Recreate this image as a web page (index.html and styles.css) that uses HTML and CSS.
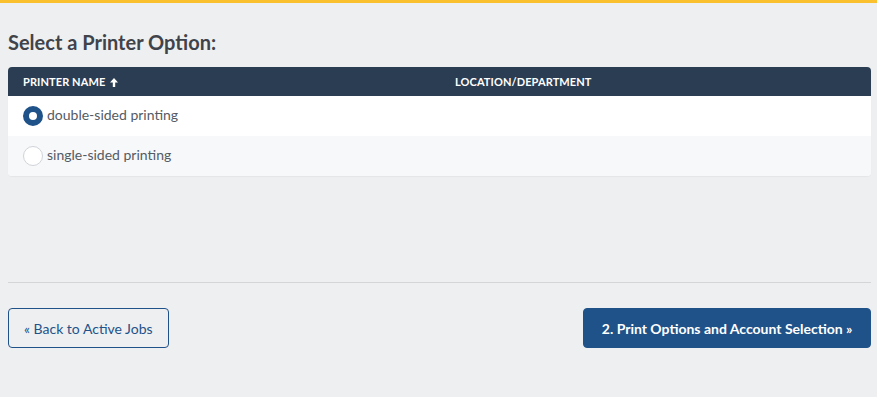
FILE: index.html
```html
<!DOCTYPE html>
<html lang="en">
<head>
    <meta charset="UTF-8">
    <meta name="viewport" content="width=device-width, initial-scale=1.0">
    <title>Select a Printer</title>
    <link rel="stylesheet" href="styles.css">
</head>
<body>
    <div class="top-bar"></div>

    <div class="page">
        <h2 class="page-title">Select a Printer Option:</h2>

        <!-- Printer list -->
        <div class="printer-table">
            <div class="table-head">
                <div class="col-name">Printer Name
                    <svg class="sort-arrow" width="8" height="9" viewBox="0 0 8 9">
                        <path d="M4 0 L8 4.5 L5.2 4.5 L5.2 9 L2.8 9 L2.8 4.5 L0 4.5 Z" fill="#fff"/>
                    </svg>
                </div>
                <div class="col-location">Location/Department</div>
            </div>
            <label class="table-row">
                <input type="radio" name="printer" class="printer-radio" checked>
                <span class="col-name">double-sided printing</span>
                <span class="col-location"></span>
            </label>
            <label class="table-row alt">
                <input type="radio" name="printer" class="printer-radio">
                <span class="col-name">single-sided printing</span>
                <span class="col-location"></span>
            </label>
        </div>

        <hr class="divider">

        <div class="actions">
            <button class="btn btn-outline">&laquo; Back to Active Jobs</button>
            <button class="btn btn-primary">2. Print Options and Account Selection &raquo;</button>
        </div>
    </div>
</body>
</html>
```

FILE: styles.css
```css
* {
    margin: 0;
    padding: 0;
    box-sizing: border-box;
    font-family: 'Lato', 'Liberation Sans', sans-serif;
}

body {
    background-color: #eeeff1;
    min-height: 100vh;
}

.top-bar {
    height: 3px;
    background-color: #fbc02d;
}

.page {
    padding: 0 6px 0 8px;
}

.page-title {
    margin-top: 27px;
    font-size: 20px;
    font-weight: 700;
    color: #404349;
    line-height: 24px;
}

.printer-table {
    margin-top: 13px;
    border-radius: 4px;
    overflow: hidden;
    background-color: #fff;
    box-shadow: 0 1px 1px rgba(0, 0, 0, 0.04);
}

.table-head {
    display: flex;
    height: 29px;
    align-items: center;
    background-color: #2a3d52;
    color: #fff;
    font-size: 11px;
    font-weight: 700;
    letter-spacing: 0.1px;
    text-transform: uppercase;
    padding-left: 15px;
}

.table-head .col-name {
    width: 432px;
}

.sort-arrow {
    margin-left: 2px;
    vertical-align: -1px;
}

.table-row {
    display: flex;
    align-items: center;
    height: 40px;
    padding-left: 15px;
    color: #555b63;
    font-size: 14px;
    cursor: pointer;
}

.table-row .col-name {
    margin-top: -3px;
}

.table-row.alt {
    background-color: #f6f8fa;
}

.printer-radio {
    appearance: none;
    width: 20px;
    height: 20px;
    border-radius: 50%;
    border: 1px solid #d0d4d9;
    background-color: #fff;
    margin-right: 4px;
}

.printer-radio:checked {
    border: 6px solid #1f5289;
}

.divider {
    margin-top: 106px;
    border: none;
    border-top: 1px solid #d4d5d7;
}

.actions {
    display: flex;
    justify-content: space-between;
    margin-top: 25px;
}

.btn {
    height: 40px;
    padding: 0 15px;
    border-radius: 4px;
    font-size: 14px;
    cursor: pointer;
}

.btn-outline {
    background-color: transparent;
    border: 1px solid #1f5289;
    color: #1f5289;
}

.btn-primary {
    padding: 0 17.5px;
    background-color: #1f5289;
    border: 1px solid #1f5289;
    color: #fff;
    font-weight: 700;
}
```
